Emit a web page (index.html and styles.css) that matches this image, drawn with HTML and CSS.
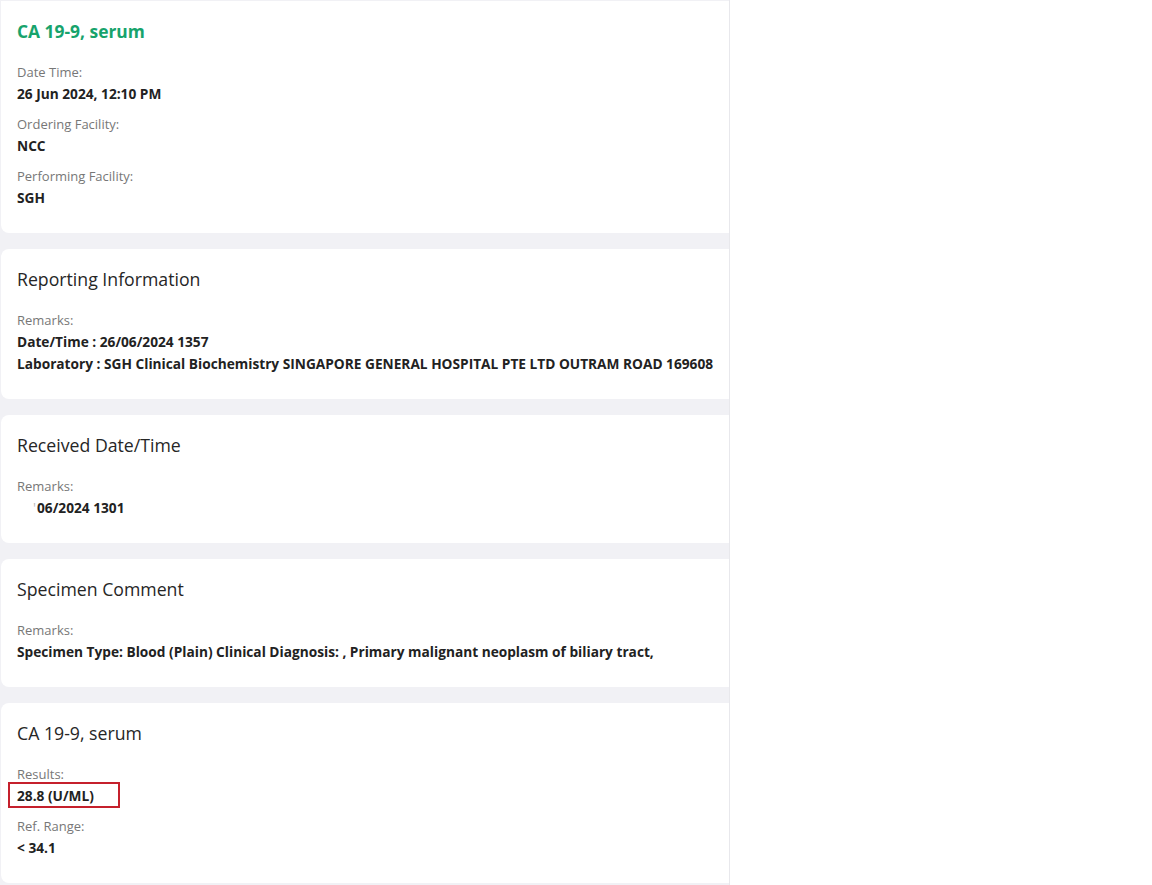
FILE: index.html
```html
<!DOCTYPE html>
<html lang="en">
<head>
  <meta charset="UTF-8" />
  <meta name="viewport" content="width=device-width, initial-scale=1.0"/>
  <title>Lab Result - CA 19-9, serum</title>
  <link rel="stylesheet" href="styles.css">
</head>
<body>

  <div class="panel">

    <!-- Test summary -->
    <section class="card card-top">
      <h1 class="test-name">CA 19-9, serum</h1>
      <div class="field">
        <div class="label">Date Time:</div>
        <div class="value">26 Jun 2024, 12:10 PM</div>
      </div>
      <div class="field">
        <div class="label">Ordering Facility:</div>
        <div class="value">NCC</div>
      </div>
      <div class="field">
        <div class="label">Performing Facility:</div>
        <div class="value">SGH</div>
      </div>
    </section>

    <!-- Reporting Information -->
    <section class="card">
      <h2>Reporting Information</h2>
      <div class="field">
        <div class="label">Remarks:</div>
        <div class="value">Date/Time : 26/06/2024 1357</div>
        <div class="value">Laboratory : SGH Clinical Biochemistry SINGAPORE GENERAL HOSPITAL PTE LTD OUTRAM ROAD 169608</div>
      </div>
    </section>

    <!-- Received Date/Time -->
    <section class="card">
      <h2>Received Date/Time</h2>
      <div class="field">
        <div class="label">Remarks:</div>
        <div class="value value-cut"><span class="tick">'</span>06/2024 1301</div>
      </div>
    </section>

    <!-- Specimen Comment -->
    <section class="card">
      <h2>Specimen Comment</h2>
      <div class="field">
        <div class="label">Remarks:</div>
        <div class="value">Specimen Type: Blood (Plain) Clinical Diagnosis: , Primary malignant neoplasm of biliary tract,</div>
      </div>
    </section>

    <!-- Result -->
    <section class="card">
      <h2>CA 19-9, serum</h2>
      <div class="field">
        <div class="label">Results:</div>
        <div class="value"><span class="highlight">28.8 (U/ML)</span></div>
      </div>
      <div class="field">
        <div class="label">Ref. Range:</div>
        <div class="value">&lt; 34.1</div>
      </div>
    </section>

  </div>

</body>
</html>
```

FILE: styles.css
```css
html, body { margin: 0; padding: 0; background: #fff; }
body { font-family: "Open Sans", "Noto Sans", sans-serif; color: #222; }

.panel {
  width: 730px;
  height: 885px;
  overflow: hidden;
  background: #f1f1f5;
  padding-top: 1px;
  box-sizing: border-box;
  display: flex;
  flex-direction: column;
  gap: 16px;
  border-right: 1px solid #e8e8ec;
}

.card {
  flex-shrink: 0;
  background: #fff;
  border-radius: 8px 0 0 8px;
  padding: 18px 16px 24px;
  margin-left: 1px;
}
.card-top { border-radius: 0 0 0 8px; }

.test-name {
  margin: 0 0 18px;
  font-size: 17.4px;
  line-height: 24px;
  font-weight: 700;
  color: #17a36c;
}

h2 {
  margin: 0 0 18px;
  font-size: 17.7px;
  line-height: 24px;
  font-weight: 400;
  color: #262626;
}

.field + .field { margin-top: 8px; }

.label {
  font-size: 13px;
  line-height: 22px;
  color: #777;
}
.value {
  font-size: 13.7px;
  line-height: 22px;
  font-weight: 700;
  color: #222;
  white-space: nowrap;
}
.value-cut { padding-left: 16px; }
.tick { color: #bbb; font-weight: 400; margin-right: 1px; }

/* annotation box drawn over the result */
.highlight {
  position: relative;
  display: inline-block;
  line-height: 22px;
  vertical-align: top;
}
.highlight::after {
  content: "";
  position: absolute;
  left: -9px;
  top: -3px;
  width: 112px;
  height: 26px;
  box-sizing: border-box;
  border: 2px solid #c5202c;
}
```
